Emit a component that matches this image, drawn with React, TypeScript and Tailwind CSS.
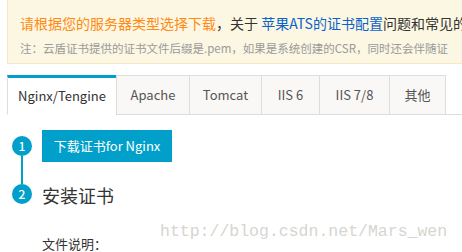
const tabs = ["Nginx/Tengine", "Apache", "Tomcat", "IIS 6", "IIS 7/8", "其他"];
const tabWidths = ["w-[109px]", "w-[73px]", "w-[72px]", "w-[58px]", "w-[70px]", "w-[57px]"];

function StepDot({ n }: { n: number }) {
  return (
    <div className="flex h-5 w-5 shrink-0 items-center justify-center rounded-full bg-[#00a0cb] text-[12px] font-medium leading-none text-white">
      {n}
    </div>
  );
}

export default function App() {
  return (
    <div className="relative h-[252px] w-[462px] overflow-hidden bg-white font-['Noto_Sans_CJK_SC','Noto_Sans',sans-serif] text-[#333]">
      {/* notice */}
      <div className="ml-[7px] h-[64px] w-[600px] border-x border-b border-[#f8e8c4] bg-[#fcf7e2] px-[12px] pt-[13px]">
        <p className="whitespace-nowrap text-[14px] leading-[20px]">
          <span className="text-[#ff8a15]">请根据您的服务器类型选择下载</span>
          <span>，关于 </span>
          <span className="text-[#0b63c9]">苹果ATS的证书配置</span>
          <span>问题和常见的</span>
          <span className="text-[#0b63c9]">证书</span>
        </p>
        <p className="mt-[7px] whitespace-nowrap text-[11.5px] leading-[16px] text-[#9a9a9a]">
          注：云盾证书提供的证书文件后缀是.pem，如果是系统创建的CSR，同时还会伴随证
        </p>
      </div>

      {/* tabs */}
      <div className="ml-[7px] mt-[11px] flex h-[40px] border-b border-[#dddddd]">
        {tabs.map((t, i) => (
          <div
            key={t}
            className={
              "-mb-px flex h-[40px] shrink-0 items-center justify-center border-b border-l text-[13px] " +
              tabWidths[i] +
              (i === 0
                ? " border-l-[#dddddd] border-b-white border-t-[3px] border-t-[#00a0cb] bg-white text-[#333]"
                : " border-[#dddddd] border-t bg-[#f9f8f6] text-[#555]") +
              (i === tabs.length - 1 ? " border-r" : "")
            }
          >
            {t}
          </div>
        ))}
      </div>

      {/* steps */}
      <div className="mt-[15px] pl-[12px]">
        <div className="flex gap-[10px]">
          <div className="flex w-5 flex-col items-center pt-[6px]">
            <StepDot n={1} />
            <div className="w-[2px] flex-1 bg-[#00a0cb]" />
          </div>
          <div className="pb-[22px]">
            <button className="flex h-[32px] w-[130px] items-center justify-center bg-[#00a0cb] text-[13px] text-white">
              下载证书for Nginx
            </button>
          </div>
        </div>
        <div className="flex gap-[10px]">
          <div className="flex w-5 flex-col items-center">
            <StepDot n={2} />
          </div>
          <div>
            <h3 className="mt-[1px] text-[18px] leading-[20px] text-[#333]">安装证书</h3>
            <p className="mt-[29px] text-[13px] leading-[20px] text-[#333]">文件说明：</p>
          </div>
        </div>
      </div>

      {/* watermark */}
      <div className="pointer-events-none absolute left-[160px] top-[222px] whitespace-nowrap font-['Liberation_Mono',monospace] text-[16.5px] leading-[20px] text-[#d6d6d0]">
        http://blog.csdn.net/Mars_wen
      </div>
    </div>
  );
}
